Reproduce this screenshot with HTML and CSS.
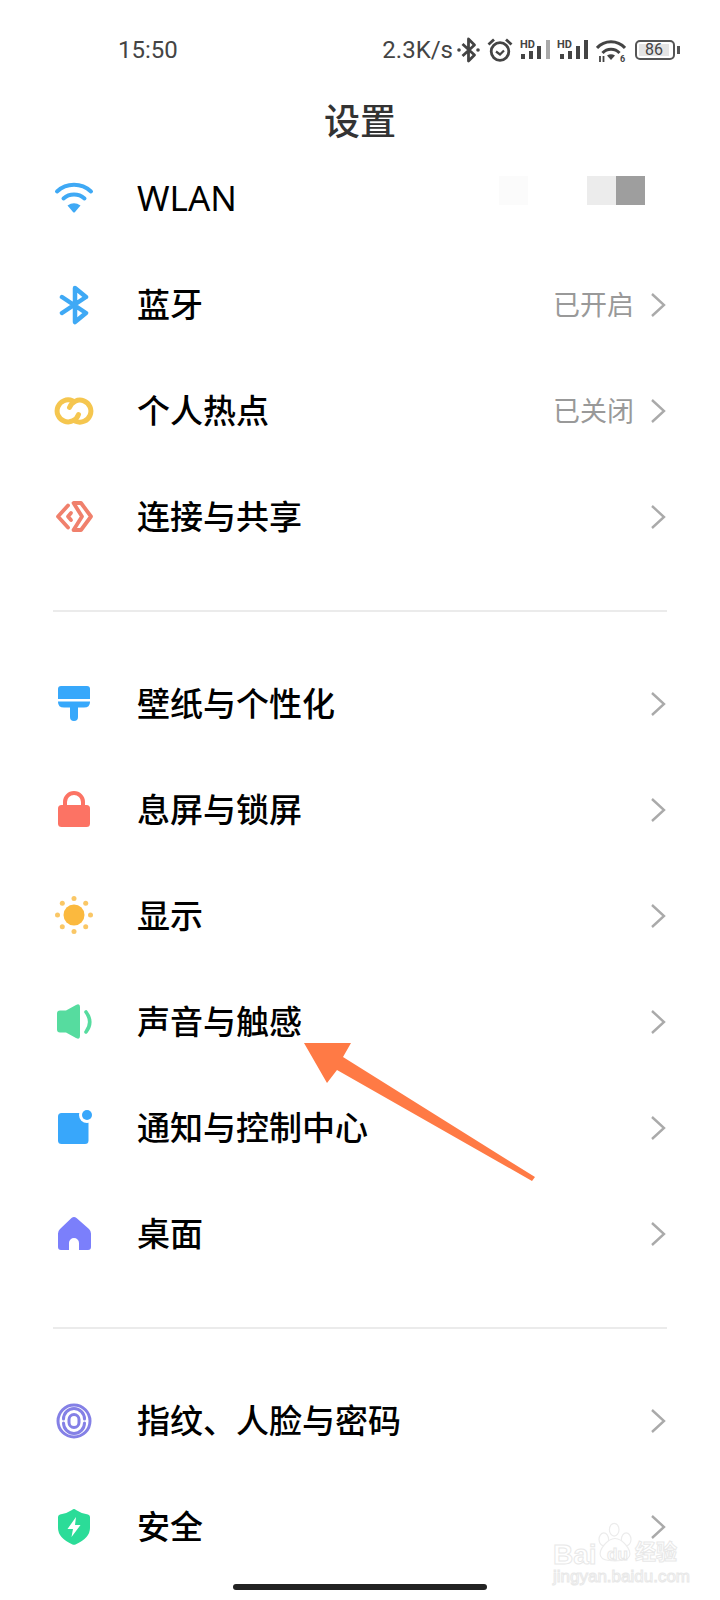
FILE: index.html
```html
<!DOCTYPE html>
<html lang="zh-CN">
<head>
    <meta charset="UTF-8">
    <meta name="viewport" content="width=device-width, initial-scale=1.0">
    <title>设置</title>
    <link rel="stylesheet" href="styles.css">
</head>
<body>
    <div class="screen">
        <div class="status-bar">
            <span class="clock">15:50</span>
            <div class="status-right">
                <span class="speed">2.3K/s</span>
                <svg class="st-bt" width="23" height="26" viewBox="0 0 23 26" fill="none" stroke="#444" stroke-width="2.8" stroke-linejoin="round"><path d="M5.500 7 L17.500 18 L11.500 24 V2 L17.500 8 L5.500 19"/><circle cx="2" cy="13" r="1.800" fill="#444" stroke="none"/><circle cx="21" cy="13" r="1.800" fill="#444" stroke="none"/></svg>
                <svg class="st-alarm" width="26" height="26" viewBox="0 0 26 26" fill="none" stroke="#444" stroke-width="2.800"><circle cx="13" cy="14.500" r="8.800"/><path d="M9 14.500 L13 17.500 L17 13.500" stroke-width="2.200"/><path d="M1.500 7.500 L7 2.500 M24.500 7.500 L19 2.500"/></svg>
                <svg class="st-sig" width="30" height="26" viewBox="0 0 30 26"><text x="0" y="11" class="st-small">HD</text><rect x="1" y="17" width="4" height="5" fill="#444"/><rect x="9" y="14" width="4" height="8" fill="#444"/><rect x="17" y="9" width="4" height="13" fill="#444"/><rect x="26" y="3" width="4" height="19" fill="#aaa"/></svg>
                <svg class="st-sig" width="32" height="26" viewBox="0 0 32 26"><text x="0" y="11" class="st-small">HD</text><rect x="3" y="17" width="4" height="5" fill="#444"/><rect x="11" y="14" width="4" height="8" fill="#444"/><rect x="19" y="9" width="4" height="13" fill="#444"/><rect x="27" y="3" width="4" height="19" fill="#444"/></svg>
                <svg class="st-wifi" width="30" height="26" viewBox="0 0 30 26" fill="none" stroke="#444" stroke-width="3"><path d="M1 11 A19 19 0 0 1 29 11"/><path d="M6.500 16 A11.500 11.500 0 0 1 23.500 16"/><path d="M11 18.500 Q15 16 19 18.500 L15 23 Z" fill="#444" stroke="none"/><text x="24" y="25" class="st-six">6</text><path d="M4 19 V25 M7.500 19 V25" stroke-width="1.800"/></svg>
                <div class="battery"><span class="battery-num">86</span></div>
                <span class="battery-tip"></span>
            </div>
        </div>

        <h1 class="page-title">设置</h1>

        <div class="group">
            <div class="row">
                <svg class="row-icon" viewBox="0 0 40 40" fill="none" stroke="#3fa9f5" stroke-width="4" stroke-linecap="round"><path d="M3 12.500 A25 25 0 0 1 37 12.500"/><path d="M9.500 19.500 A16 16 0 0 1 30.500 19.500"/><path d="M13.500 26.500 Q20 22 26.500 26.500 L21 33 Q20 34 19 33 Z" fill="#3fa9f5" stroke="none"/></svg>
                <span class="row-label row-label-latin">WLAN</span>
                <span class="blur blur-faint"></span>
                <span class="blur blur-light"></span>
                <span class="blur blur-dark"></span>
            </div>
            <div class="row">
                <svg class="row-icon" viewBox="0 0 40 40" fill="none" stroke="#3fa9f5" stroke-width="4.500" stroke-linecap="round" stroke-linejoin="round"><path d="M8 12 L32 28 L21 37 V3 L32 12 L8 28"/></svg>
                <span class="row-label">蓝牙</span>
                <span class="row-value">已开启</span>
                <svg class="chevron" viewBox="0 0 16 26"><path d="M2 2 L14 13 L2 24"/></svg>
            </div>
            <div class="row">
                <svg class="row-icon" viewBox="0 0 40 40" fill="none" stroke="#f5c64f" stroke-width="5" stroke-linecap="round"><path d="M18.500 9.800 A11 11 0 1 0 24.500 23.500"/><path d="M21.500 30.200 A11 11 0 1 0 15.500 16.500"/></svg>
                <span class="row-label">个人热点</span>
                <span class="row-value">已关闭</span>
                <svg class="chevron" viewBox="0 0 16 26"><path d="M2 2 L14 13 L2 24"/></svg>
            </div>
            <div class="row">
                <svg class="row-icon" viewBox="0 0 40 40" fill="none" stroke="#f0806c" stroke-width="3.800" stroke-linecap="round" stroke-linejoin="round"><path d="M14 8.500 L4 19.500 L14 30.500"/><path d="M17 16 L14 19.500 L17 23"/><path d="M19.500 6 H27 L37 19.500 L27 33 H19.500 L28 19.500 Z"/></svg>
                <span class="row-label">连接与共享</span>
                <svg class="chevron" viewBox="0 0 16 26"><path d="M2 2 L14 13 L2 24"/></svg>
            </div>
        </div>

        <div class="divider"></div>

        <div class="group">
            <div class="row">
                <svg class="row-icon" viewBox="0 0 40 40" fill="#37a8fb"><path d="M7 2 H33 Q36 2 36 5 V15 H4 V5 Q4 2 7 2 Z"/><path d="M4 17.500 H36 V18 Q36 23.500 30 23.500 H24 V33 A4 4 0 0 1 16 33 V23.500 H10 Q4 23.500 4 18 Z"/></svg>
                <span class="row-label">壁纸与个性化</span>
                <svg class="chevron" viewBox="0 0 16 26"><path d="M2 2 L14 13 L2 24"/></svg>
            </div>
            <div class="row">
                <svg class="row-icon" viewBox="0 0 40 40"><path d="M11 17 V12 A9 9 0 0 1 29 12 V17" fill="none" stroke="#fc7364" stroke-width="4"/><rect x="4" y="15" width="32" height="22" rx="3.500" fill="#fc7364"/></svg>
                <span class="row-label">息屏与锁屏</span>
                <svg class="chevron" viewBox="0 0 16 26"><path d="M2 2 L14 13 L2 24"/></svg>
            </div>
            <div class="row">
                <svg class="row-icon" viewBox="0 0 40 40" fill="#fac766"><circle cx="20" cy="19" r="10.500" fill="#fbb93e"/><circle cx="20" cy="2.500" r="2.500"/><circle cx="20" cy="35.500" r="2.500"/><circle cx="3.500" cy="19" r="2.500"/><circle cx="36.500" cy="19" r="2.500"/><circle cx="8.300" cy="7.300" r="2.500"/><circle cx="31.700" cy="7.300" r="2.500"/><circle cx="8.300" cy="30.700" r="2.500"/><circle cx="31.700" cy="30.700" r="2.500"/></svg>
                <span class="row-label">显示</span>
                <svg class="chevron" viewBox="0 0 16 26"><path d="M2 2 L14 13 L2 24"/></svg>
            </div>
            <div class="row">
                <svg class="row-icon" viewBox="0 0 40 40"><path d="M6 8.500 H12 L22 3 Q26 1 26 5 V34 Q26 38 22 36 L12 30.500 H6 Q3 30.500 3 27.500 V11.500 Q3 8.500 6 8.500 Z" fill="#56dc9f"/><path d="M32 10 Q39.500 20 32 30" fill="none" stroke="#56dc9f" stroke-width="3.600" stroke-linecap="round"/></svg>
                <span class="row-label">声音与触感</span>
                <svg class="chevron" viewBox="0 0 16 26"><path d="M2 2 L14 13 L2 24"/></svg>
            </div>
            <div class="row">
                <svg class="row-icon" viewBox="0 0 40 40"><rect x="4" y="5" width="30.500" height="31" rx="3.500" fill="#38a7fb"/><circle cx="33" cy="7" r="8" fill="#fff"/><circle cx="33" cy="7" r="5" fill="#38a7fb"/></svg>
                <span class="row-label">通知与控制中心</span>
                <svg class="chevron" viewBox="0 0 16 26"><path d="M2 2 L14 13 L2 24"/></svg>
            </div>
            <div class="row">
                <svg class="row-icon" viewBox="0 0 40 40"><path fill-rule="evenodd" d="M17.500 4 Q20 2 22.500 4 L35 15 Q37 17 37 19.500 V33 Q37 36 34 36 H7 Q4 36 4 33 V19.500 Q4 17 6 15 Z M15 36 H25 V29 A5 5 0 0 0 15 29 Z" fill="#7b7ffb"/></svg>
                <span class="row-label">桌面</span>
                <svg class="chevron" viewBox="0 0 16 26"><path d="M2 2 L14 13 L2 24"/></svg>
            </div>
        </div>

        <div class="divider"></div>

        <div class="group">
            <div class="row">
                <svg class="row-icon" viewBox="0 0 40 40" fill="none" stroke="#8480e6" stroke-width="3" stroke-linecap="round"><circle cx="20" cy="20" r="16"/><path d="M9.500 18 A10.500 10.500 0 0 1 30.500 18 M30.500 22 A10.500 10.500 0 0 1 9.500 22"/><rect x="15" y="13.500" width="10" height="13" rx="5"/></svg>
                <span class="row-label">指纹、人脸与密码</span>
                <svg class="chevron" viewBox="0 0 16 26"><path d="M2 2 L14 13 L2 24"/></svg>
            </div>
            <div class="row">
                <svg class="row-icon" viewBox="0 0 40 40"><path d="M20 2 Q21 2 22 3 Q28 7 34 7.500 Q36 8 36 10 V21 Q36 31 21.500 37.500 Q20 38 18.500 37.500 Q4 31 4 21 V10 Q4 8 6 7.500 Q12 7 18 3 Q19 2 20 2 Z" fill="#2bdc98"/><path d="M22 10 L13.500 22 H19 L17.500 30 L26.500 18 H21 Z" fill="#fff"/></svg>
                <span class="row-label">安全</span>
                <svg class="chevron" viewBox="0 0 16 26"><path d="M2 2 L14 13 L2 24"/></svg>
            </div>
        </div>

        <svg class="arrow" viewBox="0 0 720 1600"><polygon points="304,1043 351,1043 343,1057 535,1177 532,1181 337,1070 327,1083" fill="#ff7a45"/></svg>

        <div class="watermark">
            <svg class="paw" viewBox="0 0 50 50" fill="#fff" stroke="#ececec" stroke-width="1.500"><ellipse cx="11" cy="21" rx="6" ry="8"/><ellipse cx="24" cy="9" rx="6" ry="8"/><ellipse cx="39" cy="21" rx="6" ry="8"/><path d="M25 20 C34 20 46 34 43 42 C40 50 10 50 7 42 C4 34 16 20 25 20 Z"/></svg>
            <span class="wm-bai">Bai</span>
            <span class="wm-du">du</span>
            <span class="wm-cn">经验</span>
            <span class="wm-url">jingyan.baidu.com</span>
        </div>

        <div class="home-bar"></div>
    </div>
</body>
</html>
```

FILE: styles.css
```css
* {
    box-sizing: border-box;
}
html, body {
    margin: 0;
    padding: 0;
}
body {
    font-family: "Noto Sans", "Noto Sans CJK SC", sans-serif;
    background-color: white;
}
.screen {
    position: relative;
    width: 720px;
    height: 1600px;
    overflow: hidden;
    background-color: white;
}
.status-bar {
    height: 100px;
    display: flex;
    align-items: center;
    justify-content: space-between;
    padding: 0 40px 0 118px;
    color: #444;
}
.clock {
    font-family: Roboto, sans-serif;
    font-size: 24px;
}
.status-right {
    display: flex;
    align-items: center;
    gap: 7px;
}
.speed {
    font-family: Roboto, sans-serif;
    font-size: 24px;
    margin-right: -3px;
}
.st-small {
    font-family: Roboto, sans-serif;
    font-size: 11px;
    font-weight: 700;
    fill: #444;
}
.st-six {
    font-family: Roboto, sans-serif;
    font-size: 9px;
    font-weight: 700;
    fill: #444;
    stroke: none;
}
.battery {
    width: 40px;
    height: 20px;
    border: 2px solid #555;
    border-radius: 5px;
    padding: 2px;
    display: flex;
    margin-left: 2px;
}
.battery-num {
    width: 30px;
    background-color: #e4e4e4;
    font-family: Roboto, sans-serif;
    font-size: 16px;
    line-height: 12px;
    text-align: center;
    color: #444;
}
.battery-tip {
    width: 3px;
    height: 8px;
    background-color: #555;
    margin-left: -5px;
}
.page-title {
    margin: 0;
    height: 46px;
    line-height: 44px;
    font-size: 36px;
    font-weight: 500;
    text-align: center;
    color: #333;
}
.row {
    height: 106px;
    display: flex;
    align-items: center;
    padding: 0 54px;
}
.row-icon {
    width: 40px;
    height: 40px;
    flex-shrink: 0;
    margin-right: 43px;
}
.row-label {
    flex: 1;
    padding-bottom: 4px;
    font-size: 33px;
    font-weight: 500;
    color: #000;
}
.row-label-latin {
    font-size: 35px;
    font-weight: 400;
}
.row-value {
    padding-bottom: 4px;
    font-size: 27px;
    color: #999;
    margin-right: 16px;
}
.chevron {
    width: 16px;
    height: 26px;
    fill: none;
    stroke: #aaa;
    stroke-width: 2.400;
}
.divider {
    height: 2px;
    margin: 40px 53px 39px;
    background-color: #ebebeb;
}
.blur {
    width: 29px;
    height: 29px;
    flex-shrink: 0;
    margin-bottom: 17px;
}
.blur-faint {
    background-color: #fbfbfb;
    margin-right: 59px;
}
.blur-light {
    background-color: #ececec;
}
.blur-dark {
    background-color: #9e9e9e;
    margin-right: 21px;
}
.arrow {
    position: absolute;
    left: 0;
    top: 0;
    width: 720px;
    height: 1600px;
}
.watermark {
    position: absolute;
    left: 550px;
    top: 1520px;
    width: 170px;
    height: 66px;
    color: transparent;
    line-height: 1;
    -webkit-text-stroke: 1px #e8e8e8;
}
.watermark span {
    position: absolute;
    white-space: nowrap;
}
.paw {
    position: absolute;
    left: 45px;
    top: 2px;
    width: 40px;
    height: 41px;
}
.wm-bai {
    left: 3px;
    top: 21px;
    font-family: "Liberation Sans", sans-serif;
    font-size: 28px;
    font-weight: 700;
}
.wm-du {
    left: 57px;
    top: 26px;
    font-family: "Liberation Sans", sans-serif;
    font-size: 17px;
    font-weight: 700;
}
.wm-cn {
    left: 85px;
    top: 21px;
    font-size: 21px;
    font-weight: 700;
}
.wm-url {
    left: 3px;
    top: 48px;
    font-family: "Liberation Sans", sans-serif;
    font-size: 17px;
}
.home-bar {
    position: absolute;
    left: 233px;
    bottom: 10px;
    width: 254px;
    height: 6px;
    border-radius: 3px;
    background-color: #222;
}
```
